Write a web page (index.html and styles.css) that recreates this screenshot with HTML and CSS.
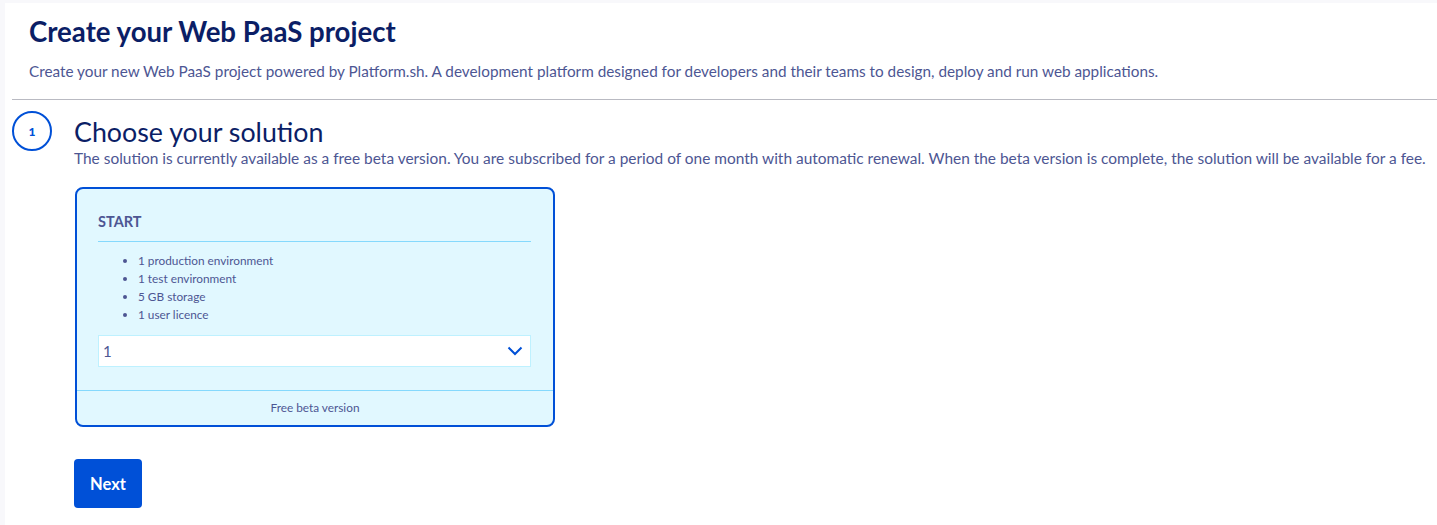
FILE: index.html
```html
<!DOCTYPE html>
<html lang="en">
<head>
<meta charset="utf-8">
<title>Create your Web PaaS project</title>
<link rel="stylesheet" href="styles.css">
</head>
<body>
<div class="page">
  <header class="header">
    <h1 class="title">Create your Web PaaS project</h1>
    <p class="lead">Create your new Web PaaS project powered by Platform.sh. A development platform designed for developers and their teams to design, deploy and run web applications.</p>
  </header>
  <div class="divider"></div>
  <section class="step">
    <div class="step-num">1</div>
    <div class="step-body">
      <h2 class="step-title">Choose your solution</h2>
      <p class="step-desc">The solution is currently available as a free beta version. You are subscribed for a period of one month with automatic renewal. When the beta version is complete, the solution will be available for a fee.</p>
      <div class="card">
        <div class="card-main">
          <div class="card-name">START</div>
          <ul class="features">
            <li>1 production environment</li>
            <li>1 test environment</li>
            <li>5 GB storage</li>
            <li>1 user licence</li>
          </ul>
          <div class="select">
            <span class="select-value">1</span>
            <svg class="chevron" width="16" height="10" viewBox="0 0 16 10"><path d="M1.5 1.5 L8 8 L14.5 1.5" fill="none" stroke="#0050d7" stroke-width="2"/></svg>
          </div>
        </div>
        <div class="card-foot">Free beta version</div>
      </div>
      <button class="btn-next">Next</button>
    </div>
  </section>
</div>
</body>
</html>
```
FILE: styles.css
```css
html, body {
  margin: 0;
  padding: 0;
}
body {
  background: #f8f8fb;
  font-family: "Lato", "Open Sans", sans-serif;
  color: #4d5693;
}
.page {
  margin: 3px 0 0 5px;
  background: #ffffff;
  height: 522px;
  overflow: hidden;
}
.header {
  padding: 12px 0 0 24px;
}
.title {
  margin: 0;
  font-size: 27.6px;
  line-height: 34px;
  font-weight: 700;
  color: #0b1e66;
}
.lead {
  margin: 12px 0 0;
  font-size: 15.3px;
  line-height: 20px;
  white-space: nowrap;
}
.divider {
  margin: 18px 0 0 7px;
  height: 1px;
  background: #b9bac2;
}
.step {
  display: flex;
  gap: 22px;
  padding: 11px 0 0 7px;
}
.step-num {
  flex: none;
  width: 36px;
  height: 36px;
  border: 2px solid #0050d7;
  border-radius: 50%;
  display: flex;
  align-items: center;
  justify-content: center;
  font-size: 12px;
  font-weight: 900;
  color: #0050d7;
}
.step-title {
  margin: 5px 0 0;
  font-size: 26.8px;
  line-height: 32px;
  font-weight: 400;
  color: #0b1e66;
}
.step-desc {
  margin: 0;
  font-size: 15.45px;
  line-height: 20px;
  white-space: nowrap;
}
.card {
  margin: 19px 0 0 1px;
  width: 476px;
  border: 2px solid #0050d7;
  border-radius: 8px;
  background: #e1f8ff;
}
.card-main {
  padding: 24px 22px 23px 20px;
}
.card-name {
  font-size: 14.5px;
  font-weight: 700;
  line-height: 18px;
  padding-bottom: 10px;
  border-bottom: 1px solid #85d9fd;
  margin-left: 1px;
}
.features {
  margin: 10px 0 0;
  padding: 0 0 0 41px;
  font-size: 11.8px;
  line-height: 18px;
}
.features li {
  height: 18px;
}
.select {
  margin: 11px 0 0 1px;
  height: 30px;
  background: #ffffff;
  border: 1px solid #bef1ff;
  display: flex;
  align-items: center;
  justify-content: space-between;
  padding: 0 7px 0 4px;
}
.select-value {
  font-size: 15px;
}
.chevron {
  display: block;
}
.card-foot {
  border-top: 1px solid #85d9fd;
  text-align: center;
  font-size: 11.8px;
  line-height: 34px;
}
.btn-next {
  margin-top: 32px;
  display: block;
  width: 68px;
  height: 49px;
  border: none;
  border-radius: 4px;
  background: #0050d7;
  color: #ffffff;
  font-family: inherit;
  font-size: 16.5px;
  font-weight: 700;
  cursor: pointer;
}
```
